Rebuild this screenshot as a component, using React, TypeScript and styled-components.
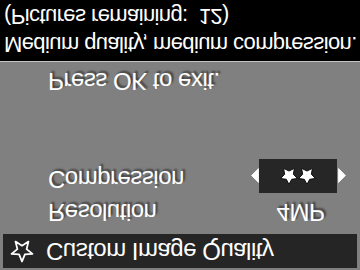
import React from "react";
import styled, { createGlobalStyle } from "styled-components";

const Global = createGlobalStyle`
  html, body { margin: 0; padding: 0; background: #808080; overflow: hidden; }
  #root { width: 360px; height: 270px; }
`;

const FONT = `"Liberation Sans", Arial, sans-serif`;

const Screen = styled.div`
  width: 360px;
  height: 270px;
  background: #808080;
  display: flex;
  flex-direction: column;
  transform: scaleY(-1);
  font-family: ${FONT};
  color: #fff;
  overflow: hidden;
`;

const TitleBar = styled.div`
  margin: 2px 3px 0;
  height: 34px;
  background: #252525;
  display: flex;
  align-items: center;
  padding-left: 7px;
  gap: 12px;
`;

const TitleText = styled.span`
  font-size: 24px;
  line-height: 1;
  letter-spacing: -0.5px;
`;

const Settings = styled.div`
  margin-top: 5px;
  display: flex;
  flex-direction: column;
  gap: 2px;
`;

const Row = styled.div`
  height: 34px;
  display: grid;
  grid-template-columns: 201px 10px 78px 9px;
  align-items: center;
  padding-left: 48px;
`;

const Label = styled.span<{ $raise?: number }>`
  font-size: 24px;
  line-height: 1;
  letter-spacing: -0.5px;
  text-shadow: 2px 2px 2px rgba(0, 0, 0, 0.55);
  margin-bottom: ${(p) => (p.$raise ? p.$raise * 2 : 0)}px;
`;

const Value = styled.div<{ $selected?: boolean }>`
  height: 34px;
  background: ${(p) => (p.$selected ? "#262626" : "transparent")};
  display: flex;
  align-items: center;
  justify-content: center;
  gap: 0;
  padding-left: ${(p) => (p.$selected ? "0" : "5px")};
  font-size: 24px;
  line-height: 1;
  letter-spacing: -0.5px;
  text-shadow: 2px 2px 2px rgba(0, 0, 0, 0.55);
`;

const ArrowCell = styled.div<{ $side: "left" | "right" }>`
  display: flex;
  justify-content: ${(p) => (p.$side === "left" ? "flex-start" : "flex-end")};
  align-items: center;
  padding-left: ${(p) => (p.$side === "left" ? "2px" : "0")};
`;

const Hint = styled.div`
  margin-top: 66px;
  padding-left: 48px;
  font-size: 24px;
  line-height: 1;
  letter-spacing: -0.5px;
  text-shadow: 2px 2px 2px rgba(0, 0, 0, 0.55);
`;

const InfoBand = styled.div`
  margin-top: auto;
  height: 58px;
  border-top: 1px solid #c4c4c4;
  background: #000;
  padding: 3px 0 0 4px;
  display: flex;
  flex-direction: column;
`;

const InfoLine = styled.div`
  font-size: 22px;
  line-height: 28px;
  letter-spacing: -0.6px;
  white-space: pre;
`;

const OUTLINE_STAR =
  "12,1.5 14.9,8.6 22.46,9.1 16.6,13.9 18.47,21.4 12,17.3 5.53,21.4 7.4,13.9 1.54,9.1 9.1,8.6";

const FILLED_STAR =
  "12,0.8 15.6,7.6 23.2,8.7 17.8,14.3 19.2,22.2 12,18.6 4.8,22.2 6.2,14.3 0.8,8.7 8.4,7.6";

const OutlineStar = () => (
  <svg width="24" height="24" viewBox="0 0 24 24">
    <polygon points={OUTLINE_STAR} fill="none" stroke="#fff" strokeWidth="1.8" strokeLinejoin="round" />
  </svg>
);

const FilledStar = () => (
  <svg width="18" height="18" viewBox="0 0 24 24">
    <polygon points={FILLED_STAR} fill="#fff" stroke="#000" strokeWidth="1.2" strokeLinejoin="round" />
  </svg>
);

const Arrow = ({ dir }: { dir: "left" | "right" }) => (
  <svg width="8" height="15" viewBox="0 0 8 15">
    <polygon
      points={dir === "left" ? "7.5,0.5 7.5,14.5 0.5,7.5" : "0.5,0.5 0.5,14.5 7.5,7.5"}
      fill="#fff"
      stroke="#fff"
      strokeWidth="0.8"
      strokeLinejoin="round"
    />
  </svg>
);

export default function App() {
  return (
    <>
      <Global />
      <Screen>
        <TitleBar>
          <OutlineStar />
          <TitleText>Custom Image Quality</TitleText>
        </TitleBar>
        <Settings>
          <Row>
            <Label>Resolution</Label>
            <ArrowCell $side="left" />
            <Value>4MP</Value>
            <ArrowCell $side="right" />
          </Row>
          <Row>
            <Label $raise={3}>Compression</Label>
            <ArrowCell $side="left">
              <Arrow dir="left" />
            </ArrowCell>
            <Value $selected>
              <FilledStar />
              <FilledStar />
            </Value>
            <ArrowCell $side="right">
              <Arrow dir="right" />
            </ArrowCell>
          </Row>
        </Settings>
        <Hint>Press OK to exit.</Hint>
        <InfoBand>
          <InfoLine>Medium quality, medium compression.</InfoLine>
          <InfoLine>(Pictures remaining:  12)</InfoLine>
        </InfoBand>
      </Screen>
    </>
  );
}
